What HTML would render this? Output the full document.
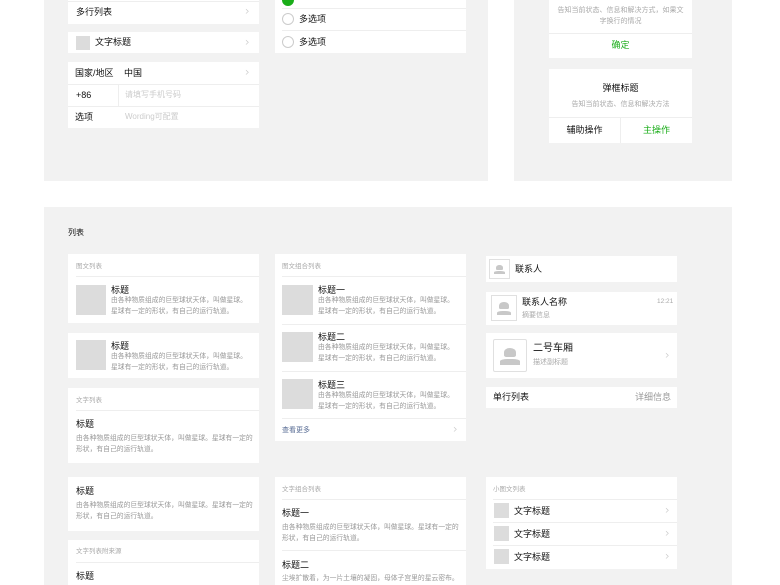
<!DOCTYPE html>
<html><head><meta charset="utf-8"><style>
*{margin:0;padding:0;box-sizing:border-box}
body{width:780px;height:585px;background:#fff;position:relative;overflow:hidden;font-family:"Liberation Sans","Noto Sans CJK SC",sans-serif;color:#111}
.a{position:absolute}
.p{background:#f2f2f2}
.c{background:#fff}
.t{font-size:9px;white-space:nowrap;line-height:1}
.s{font-size:6.5px;color:#aaa;white-space:nowrap;line-height:1}
.d{font-size:6.8px;color:#999;line-height:10.5px}
.ln{height:1px;background:#eee}
.img{background:#dcdcdc}
.chev{font-size:12px;color:#c4c4c4;line-height:1;font-family:"DejaVu Sans",sans-serif;font-weight:200}
.av{border:1px solid #e0e0e0;background:#fff}
.av::after{content:"";position:absolute;left:30%;right:30%;top:25%;height:30%;background:#c8c8c8;border-radius:50% 50% 20% 20%}
.av::before{content:"";position:absolute;left:20%;right:20%;bottom:20%;height:18%;background:#c8c8c8;border-radius:40% 40% 0 0}
</style></head><body>
<div class="a p" style="left:44px;top:0;width:444px;height:181px"></div>
<div class="a p" style="left:514px;top:0;width:218px;height:181px"></div>
<div class="a p" style="left:44px;top:207px;width:688px;height:378px"></div>

<div class="a c" style="left:68px;top:0;width:191px;height:24px"></div>
<div class="a ln" style="left:68px;top:1px;width:191px"></div>
<div class="a t" style="left:76px;top:8px">多行列表</div><div class="a chev" style="left:245px;top:5px">›</div>
<div class="a c" style="left:68px;top:32px;width:191px;height:21px"></div>
<div class="a img" style="left:76px;top:36px;width:14px;height:14px"></div>
<div class="a t" style="left:95px;top:38px">文字标题</div><div class="a chev" style="left:245px;top:36px">›</div>
<div class="a c" style="left:68px;top:62px;width:191px;height:66px"></div>
<div class="a ln" style="left:68px;top:84px;width:191px"></div>
<div class="a ln" style="left:68px;top:106px;width:191px"></div>
<div class="a" style="left:118px;top:84px;width:1px;height:22px;background:#eee"></div>
<div class="a t" style="left:75px;top:69px">国家/地区</div><div class="a t" style="left:124px;top:69px">中国</div><div class="a chev" style="left:245px;top:66px">›</div>
<div class="a t" style="left:76px;top:91px">+86</div><div class="a t" style="left:125px;top:91px;color:#ccc;font-size:8px">请填写手机号码</div>
<div class="a t" style="left:75px;top:113px">选项</div><div class="a t" style="left:125px;top:113px;color:#ccc;font-size:8px">Wording可配置</div>

<div class="a c" style="left:275px;top:0;width:191px;height:53px"></div>
<div class="a" style="left:282px;top:-6px;width:12px;height:12px;border-radius:50%;background:#1aad19"></div>
<div class="a ln" style="left:282px;top:8px;width:184px"></div>
<div class="a ln" style="left:282px;top:30px;width:184px"></div>
<div class="a" style="left:282px;top:13px;width:12px;height:12px;border-radius:50%;border:1px solid #ccc"></div>
<div class="a t" style="left:299px;top:15px">多选项</div>
<div class="a" style="left:282px;top:36px;width:12px;height:12px;border-radius:50%;border:1px solid #ccc"></div>
<div class="a t" style="left:299px;top:38px">多选项</div>

<div class="a c" style="left:549px;top:0;width:143px;height:58px"></div>
<div class="a s" style="left:549px;top:5px;width:143px;text-align:center;font-size:7px;line-height:11px;white-space:normal;padding:0 7px">告知当前状态、信息和解决方式，如果文字换行的情况</div>
<div class="a ln" style="left:549px;top:33px;width:143px"></div>
<div class="a t" style="left:549px;top:41px;width:143px;text-align:center;color:#1aad19">确定</div>
<div class="a c" style="left:549px;top:69px;width:143px;height:74px"></div>
<div class="a t" style="left:549px;top:84px;width:143px;text-align:center">弹框标题</div>
<div class="a s" style="left:549px;top:101px;width:143px;text-align:center;font-size:7px">告知当前状态、信息和解决方法</div>
<div class="a ln" style="left:549px;top:117px;width:143px"></div>
<div class="a" style="left:620px;top:117px;width:1px;height:26px;background:#eee"></div>
<div class="a t" style="left:549px;top:126px;width:71px;text-align:center">辅助操作</div>
<div class="a t" style="left:621px;top:126px;width:71px;text-align:center;color:#1aad19">主操作</div>

<div class="a t" style="left:68px;top:229px;font-size:8px">列表</div>

<div class="a c" style="left:68px;top:254px;width:191px;height:69px"></div>
<div class="a s" style="left:76px;top:264px">图文列表</div>
<div class="a ln" style="left:76px;top:276px;width:183px"></div>
<div class="a img" style="left:76px;top:285px;width:30px;height:30px"></div>
<div class="a t" style="left:111px;top:286px">标题</div>
<div class="a d" style="left:111px;top:296px;width:142px">由各种物质组成的巨型球状天体，叫做星球。星球有一定的形状，有自己的运行轨道。</div>
<div class="a c" style="left:68px;top:333px;width:191px;height:45px"></div>
<div class="a img" style="left:76px;top:340px;width:30px;height:30px"></div>
<div class="a t" style="left:111px;top:342px">标题</div>
<div class="a d" style="left:111px;top:352px;width:142px">由各种物质组成的巨型球状天体，叫做星球。星球有一定的形状，有自己的运行轨道。</div>
<div class="a c" style="left:68px;top:388px;width:191px;height:75px"></div>
<div class="a s" style="left:76px;top:398px">文字列表</div>
<div class="a ln" style="left:76px;top:410px;width:183px"></div>
<div class="a t" style="left:76px;top:420px">标题</div>
<div class="a d" style="left:76px;top:434px;width:178px">由各种物质组成的巨型球状天体，叫做星球。星球有一定的形状，有自己的运行轨道。</div>
<div class="a c" style="left:68px;top:477px;width:191px;height:54px"></div>
<div class="a t" style="left:76px;top:487px">标题</div>
<div class="a d" style="left:76px;top:501px;width:178px">由各种物质组成的巨型球状天体，叫做星球。星球有一定的形状，有自己的运行轨道。</div>
<div class="a c" style="left:68px;top:540px;width:191px;height:45px"></div>
<div class="a s" style="left:76px;top:549px">文字列表附来源</div>
<div class="a ln" style="left:76px;top:562px;width:183px"></div>
<div class="a t" style="left:76px;top:572px">标题</div>

<div class="a c" style="left:275px;top:254px;width:191px;height:187px"></div>
<div class="a s" style="left:282px;top:264px">图文组合列表</div>
<div class="a ln" style="left:282px;top:276px;width:184px"></div>
<div class="a img" style="left:282px;top:285px;width:31px;height:30px"></div>
<div class="a t" style="left:318px;top:286px">标题一</div>
<div class="a d" style="left:318px;top:296px;width:142px">由各种物质组成的巨型球状天体，叫做星球。星球有一定的形状，有自己的运行轨道。</div>
<div class="a ln" style="left:282px;top:324px;width:184px"></div>
<div class="a img" style="left:282px;top:332px;width:31px;height:30px"></div>
<div class="a t" style="left:318px;top:333px">标题二</div>
<div class="a d" style="left:318px;top:343px;width:142px">由各种物质组成的巨型球状天体，叫做星球。星球有一定的形状，有自己的运行轨道。</div>
<div class="a ln" style="left:282px;top:371px;width:184px"></div>
<div class="a img" style="left:282px;top:379px;width:31px;height:30px"></div>
<div class="a t" style="left:318px;top:381px">标题三</div>
<div class="a d" style="left:318px;top:391px;width:142px">由各种物质组成的巨型球状天体，叫做星球。星球有一定的形状，有自己的运行轨道。</div>
<div class="a ln" style="left:282px;top:418px;width:184px"></div>
<div class="a s" style="left:282px;top:427px;color:#586c94;font-size:7px">查看更多</div>
<div class="a chev" style="left:453px;top:423px">›</div>
<div class="a c" style="left:275px;top:477px;width:191px;height:108px"></div>
<div class="a s" style="left:282px;top:487px">文字组合列表</div>
<div class="a ln" style="left:282px;top:499px;width:184px"></div>
<div class="a t" style="left:282px;top:509px">标题一</div>
<div class="a d" style="left:282px;top:523px;width:180px">由各种物质组成的巨型球状天体，叫做星球。星球有一定的形状，有自己的运行轨道。</div>
<div class="a ln" style="left:282px;top:550px;width:184px"></div>
<div class="a t" style="left:282px;top:561px">标题二</div>
<div class="a d" style="left:282px;top:574px;width:180px">尘埃扩散着，为一片土壤的凝固，母体子宫里的星云密布。</div>

<div class="a c" style="left:486px;top:256px;width:191px;height:26px"></div>
<div class="a av" style="left:489px;top:259px;width:21px;height:20px"></div>
<div class="a t" style="left:515px;top:265px">联系人</div>
<div class="a c" style="left:486px;top:292px;width:191px;height:33px"></div>
<div class="a av" style="left:491px;top:295px;width:26px;height:26px"></div>
<div class="a t" style="left:522px;top:298px">联系人名称</div>
<div class="a s" style="left:522px;top:312px;font-size:7px">摘要信息</div>
<div class="a s" style="left:657px;top:299px">12:21</div>
<div class="a c" style="left:486px;top:333px;width:191px;height:45px"></div>
<div class="a av" style="left:493px;top:339px;width:34px;height:33px;border-radius:2px"></div>
<div class="a t" style="left:533px;top:344px;font-size:10px">二号车厢</div>
<div class="a s" style="left:533px;top:359px;font-size:7px">描述副标题</div>
<div class="a chev" style="left:665px;top:349px">›</div>
<div class="a c" style="left:486px;top:387px;width:191px;height:21px"></div>
<div class="a t" style="left:493px;top:393px">单行列表</div>
<div class="a t" style="left:635px;top:393px;color:#999">详细信息</div>
<div class="a c" style="left:486px;top:477px;width:191px;height:92px"></div>
<div class="a s" style="left:493px;top:487px">小图文列表</div>
<div class="a ln" style="left:493px;top:499px;width:184px"></div>
<div class="a ln" style="left:493px;top:522px;width:184px"></div>
<div class="a ln" style="left:493px;top:545px;width:184px"></div>
<div class="a img" style="left:494px;top:503px;width:15px;height:15px"></div>
<div class="a t" style="left:514px;top:507px">文字标题</div><div class="a chev" style="left:665px;top:504px">›</div>
<div class="a img" style="left:494px;top:526px;width:15px;height:15px"></div>
<div class="a t" style="left:514px;top:530px">文字标题</div><div class="a chev" style="left:665px;top:527px">›</div>
<div class="a img" style="left:494px;top:549px;width:15px;height:15px"></div>
<div class="a t" style="left:514px;top:553px">文字标题</div><div class="a chev" style="left:665px;top:550px">›</div>
</body></html>
